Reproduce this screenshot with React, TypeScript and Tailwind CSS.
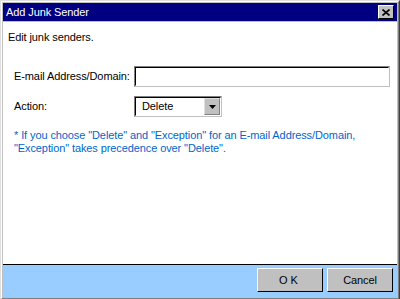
import { useState } from "react"

const font = { fontFamily: '"Liberation Sans", Arial, sans-serif' }

export default function App() {
  const [email, setEmail] = useState("")
  const [action, setAction] = useState("Delete")

  return (
    <div className="w-[400px] h-[299px] overflow-hidden bg-white text-[11px] leading-[13px] tracking-[-0.1px] text-black" style={font}>
      {/* window frame */}
      <div className="w-[400px] h-[300px] border-l border-t border-r border-b border-l-[#dfdfdf] border-t-[#dfdfdf] border-r-[#404040] border-b-[#404040]">
        <div className="h-full border border-l-white border-t-white border-r-[#808080] border-b-[#808080] bg-[#c0c0c0] p-px flex flex-col">
          {/* title bar */}
          <div className="h-[18px] bg-[#000080] flex items-center justify-between pl-[3px] pr-[3px]">
            <span className="text-white">Add Junk Sender</span>
            <button className="w-4 h-[14px] bg-[#c0c0c0] border border-l-white border-t-white border-r-black border-b-black flex items-center justify-center">
              <svg width="8" height="7" viewBox="0 0 8 7">
                <path d="M0.5 0.5 L7.5 6.5 M7.5 0.5 L0.5 6.5" stroke="#000" strokeWidth="1.6" />
              </svg>
            </button>
          </div>

          {/* body */}
          <div className="mt-px h-[243px] bg-white border-b border-black flex flex-col">
            <p className="pl-[5px] mt-[9px]">Edit junk senders.</p>

            <div className="pl-[11px] mt-[22px] flex flex-col gap-[9px]">
              <div className="flex items-center">
                <label className="w-[120px]">E-mail Address/Domain:</label>
                <div className="w-[256px] h-[21px] border border-l-[#808080] border-t-[#808080] border-r-[#c0c0c0] border-b-[#c0c0c0]">
                  <input
                    value={email}
                    onChange={e => setEmail(e.target.value)}
                    className="w-full h-full border border-l-black border-t-black border-r-white border-b-white outline-none px-1 text-[11px]"
                    style={font}
                  />
                </div>
              </div>
              <div className="flex items-center">
                <label className="w-[120px]">Action:</label>
                <div className="w-[88px] h-[21px] border border-l-[#808080] border-t-[#808080] border-r-[#c0c0c0] border-b-[#c0c0c0]">
                  <div className="w-full h-full border border-l-black border-t-black border-r-white border-b-white flex items-center">
                    <span className="flex-1 pl-[6px]" onClick={() => setAction(action)}>{action}</span>
                    <div className="w-4 h-[17px] bg-[#c0c0c0] border border-l-[#dfdfdf] border-t-[#dfdfdf] border-r-[#808080] border-b-[#808080] flex items-center justify-center">
                      <svg width="7" height="4" viewBox="0 0 7 4">
                        <path d="M0 0 H7 L3.5 4 Z" fill="#000" />
                      </svg>
                    </div>
                  </div>
                </div>
              </div>
            </div>

            <p className="pl-[11px] mt-[12px] text-[#0066cc]">
              * If you choose "Delete" and "Exception" for an E-mail Address/Domain,
              <br />
              "Exception" takes precedence over "Delete".
            </p>
          </div>

          {/* footer */}
          <div className="h-[32px] bg-[#99ccff] flex justify-end items-start gap-1 pt-[3px] pr-1">
            <button className="w-[66px] h-6 bg-[#c0c0c0] border border-l-white border-t-white border-r-black border-b-black tracking-[3px]" style={font}>
              OK
            </button>
            <button className="w-[66px] h-6 bg-[#c0c0c0] border border-l-white border-t-white border-r-black border-b-black" style={font}>
              Cancel
            </button>
          </div>
        </div>
      </div>
    </div>
  )
}
